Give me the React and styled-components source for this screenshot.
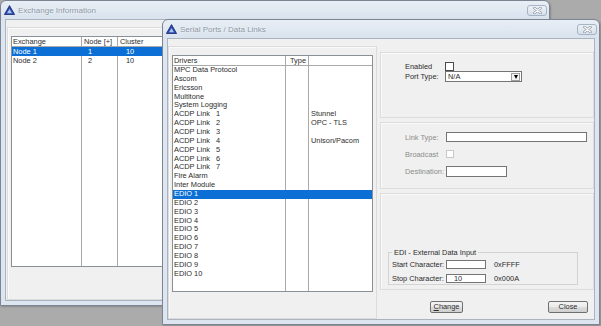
import React from "react";
import styled, { createGlobalStyle } from "styled-components";

const GlobalStyle = createGlobalStyle`
  html, body {
    margin: 0;
    padding: 0;
    background: #ababab;
  }
  * {
    box-sizing: border-box;
  }
`;

const FONT = `"Liberation Sans", Arial, sans-serif`;

// 1px vertical rules drawn behind list rows, at the given x offsets
const columnLines = (xs) =>
  "linear-gradient(to right, " +
  xs
    .map((x, i) => {
      const prev = i === 0 ? 0 : xs[i - 1] + 1;
      return `transparent ${prev}px ${x}px, #a9a9a9 ${x}px ${x + 1}px`;
    })
    .join(", ") +
  `, transparent ${xs[xs.length - 1] + 1}px)`;

const drivers = [
  { name: "MPC Data Protocol" },
  { name: "Ascom" },
  { name: "Ericsson" },
  { name: "Multitone" },
  { name: "System Logging" },
  { link: 1, extra: "Stunnel" },
  { link: 2, extra: "OPC - TLS" },
  { link: 3 },
  { link: 4, extra: "Unison/Pacom" },
  { link: 5 },
  { link: 6 },
  { link: 7 },
  { name: "Fire Alarm" },
  { name: "Inter Module" },
  ...Array.from({ length: 10 }, (_, i) => ({ name: `EDIO ${i + 1}` })),
];

const exchanges = [
  { name: "Node 1", node: "1", cluster: "10" },
  { name: "Node 2", node: "2", cluster: "10" },
];

function AppIcon() {
  return (
    <svg width="11" height="10" viewBox="0 0 11 10">
      <polygon points="5.5,0.6 10.6,9.5 0.4,9.5" fill="#2a4cae" stroke="#16266e" strokeWidth="0.8" />
      <polygon points="5.5,4 8,8.2 3,8.2" fill="#a9c2ef" />
    </svg>
  );
}

function CloseGlyph() {
  return (
    <svg width="9" height="7" viewBox="0 0 9 7">
      <path d="M1.5 1 L7.5 6 M7.5 1 L1.5 6" stroke="#8e99a6" strokeWidth="2.6" strokeLinecap="round" />
      <path d="M1.5 1 L7.5 6 M7.5 1 L1.5 6" stroke="#ffffff" strokeWidth="1.1" strokeLinecap="round" />
    </svg>
  );
}

function DialogWindow({ left, top, width, height, title, children }) {
  return (
    <Window $left={left} $top={top} $width={width} $height={height}>
      <TitleBar>
        <AppIcon />
        <Title>{title}</Title>
        <CloseButton>
          <CloseGlyph />
        </CloseButton>
      </TitleBar>
      <Client>{children}</Client>
    </Window>
  );
}

export default function App() {
  const frontCols = "113px 23px 1fr";
  const backCols = "70px 36px 1fr";

  return (
    <>
      <GlobalStyle />
      <Desktop>
        <DialogWindow left={0} top={0} width={550} height={306} title="Exchange Information">
          <ExchangePanel>
            <ListView>
              <ListHeader $cols={backCols}>
                <HeadCell $pad={1}>Exchange</HeadCell>
                <HeadCell $pad={2}>Node [+]</HeadCell>
                <HeadCell $pad={2}>Cluster</HeadCell>
              </ListHeader>
              <ListBody $lines={[69, 105]}>
                {exchanges.map((ex, i) => (
                  <Row key={ex.name} $cols={backCols} $h={9} $selected={i === 0}>
                    <Cell $pad={1}>{ex.name}</Cell>
                    <Cell $pad={6}>{ex.node}</Cell>
                    <Cell $pad={8}>{ex.cluster}</Cell>
                  </Row>
                ))}
              </ListBody>
            </ListView>
          </ExchangePanel>
        </DialogWindow>

        <DialogWindow left={162} top={19} width={438} height={306} title="Serial Ports / Data Links">
          <DriverPanel>
            <ListView>
              <ListHeader $cols={frontCols}>
                <HeadCell $pad={1}>Drivers</HeadCell>
                <HeadCell $pad={4}>Type</HeadCell>
                <HeadCell $pad={2} $last />
              </ListHeader>
              <ListBody $lines={[112, 135]}>
                {drivers.map((d, i) => (
                  <Row key={i} $cols={frontCols} $h={8.87} $selected={i === 14}>
                    <Cell $pad={1}>
                      {d.link ? (
                        <>
                          <LinkName>ACDP Link</LinkName>
                          {d.link}
                        </>
                      ) : (
                        d.name
                      )}
                    </Cell>
                    <Cell $pad={4} />
                    <Cell $pad={2}>{d.extra}</Cell>
                  </Row>
                ))}
              </ListBody>
            </ListView>
          </DriverPanel>

          <SideColumn>
            <PortGroup>
              <FormGrid $label={40} $rows="10px 11px" $gap={0}>
                <Label>Enabled</Label>
                <CheckBox />
                <Label>Port Type:</Label>
                <Select>
                  <span>N/A</span>
                  <DropButton>
                    <Arrow />
                  </DropButton>
                </Select>
              </FormGrid>
            </PortGroup>

            <LinkGroup>
              <FormGrid $label={41} $rows="10px 10px 11px" $gap={7}>
                <Label $disabled>Link Type:</Label>
                <TextBox $width={141} $height={10} />
                <Label $disabled>Broadcast</Label>
                <CheckBox $disabled />
                <Label $disabled>Destination:</Label>
                <TextBox $width={61} $height={11} />
              </FormGrid>
            </LinkGroup>

            <EdiGroup>
              <GroupBox>
                <Legend>EDI - External Data Input</Legend>
                <EdiGrid>
                  <Label>Start Character:</Label>
                  <TextBox $width={40} $height={9} />
                  <Label>0xFFFF</Label>
                  <Label>Stop Character:</Label>
                  <TextBox $width={40} $height={9} $pad={7}>
                    10
                  </TextBox>
                  <Label>0x000A</Label>
                </EdiGrid>
              </GroupBox>
            </EdiGroup>

            <ButtonBar>
              <Button $width={33}>
                <u>C</u>hange
              </Button>
              <Button $width={40}>Close</Button>
            </ButtonBar>
          </SideColumn>
        </DialogWindow>
      </Desktop>
    </>
  );
}

const Desktop = styled.div`
  position: relative;
  width: 601px;
  height: 326px;
  overflow: hidden;
  background: #ababab;
  font-family: ${FONT};
  font-size: 7.4px;
  color: #2c2c2c;
`;

const Window = styled.div`
  position: absolute;
  left: ${(p) => p.$left}px;
  top: ${(p) => p.$top}px;
  width: ${(p) => p.$width}px;
  height: ${(p) => p.$height}px;
  display: flex;
  flex-direction: column;
  padding: 0 4px 4px;
  border: 1px solid #7b8490;
  border-radius: 6px 6px 0 0;
  background: linear-gradient(#e8eef5, #d8e2ed 19px, #dde6f0 19px, #dde6f0);
  box-shadow: 1px 1px 2px rgba(0, 0, 0, 0.2);
`;

const TitleBar = styled.div`
  display: flex;
  align-items: center;
  height: 18px;
  margin: 0 -2px 0 -1px;
  gap: 3px;
`;

const Title = styled.div`
  flex: 1;
  font-size: 8px;
  color: #8b97a4;
  text-shadow: 0 0 2px #ffffff;
  white-space: nowrap;
`;

const CloseButton = styled.div`
  display: flex;
  align-items: center;
  justify-content: center;
  width: 20px;
  height: 11px;
  border: 1px solid #a6b3c2;
  border-radius: 3px;
  background: linear-gradient(#edf2f7, #d6e0ea);
`;

const Client = styled.div`
  flex: 1;
  display: flex;
  border: 1px solid #aab4bf;
  background: #f0f0f0;
`;

const Panel = styled.div`
  display: flex;
  border: 1px solid #dcdcdc;
  box-shadow: inset 1px 1px 0 #fafafa;
`;

const ExchangePanel = styled(Panel)`
  flex: 1;
  margin: 7px 1px 0 1px;
  padding: 8px 3px 32px 3px;
`;

const DriverPanel = styled(Panel)`
  width: 209px;
  margin-top: 7px;
  padding: 8px 3px 26px 3px;
`;

const ListView = styled.div`
  flex: 1;
  display: flex;
  flex-direction: column;
  background: #ffffff;
  border: 1px solid #8a9098;
`;

const ListHeader = styled.div`
  display: grid;
  grid-template-columns: ${(p) => p.$cols};
  height: 10px;
  border-bottom: 1px solid #a9a9a9;
`;

const HeadCell = styled.div`
  padding-left: ${(p) => p.$pad}px;
  line-height: 9px;
  white-space: nowrap;
  overflow: hidden;
  border-right: ${(p) => (p.$last ? "none" : "1px solid #a9a9a9")};
`;

const ListBody = styled.div`
  flex: 1;
  background: ${(p) => columnLines(p.$lines)};
`;

const Row = styled.div`
  display: grid;
  grid-template-columns: ${(p) => p.$cols};
  height: ${(p) => p.$h}px;
  line-height: ${(p) => p.$h}px;
  background: ${(p) => (p.$selected ? "#0b6fd6" : "transparent")};
  color: ${(p) => (p.$selected ? "#ffffff" : "inherit")};
`;

const Cell = styled.div`
  padding-left: ${(p) => p.$pad}px;
  white-space: nowrap;
  overflow: hidden;
`;

const LinkName = styled.span`
  display: inline-block;
  width: 42px;
`;

const SideColumn = styled.div`
  width: 214px;
  margin-left: 3px;
  display: flex;
  flex-direction: column;
  padding-top: 13px;
`;

const PortGroup = styled(Panel)`
  height: 66px;
  padding: 8px 0 0 24px;
  margin-bottom: 4px;
`;

const LinkGroup = styled(Panel)`
  height: 67px;
  padding: 9px 0 0 24px;
  margin-bottom: 4px;
`;

const EdiGroup = styled(Panel)`
  height: 97px;
  flex-direction: column;
  padding-top: 54px;
`;

const FormGrid = styled.div`
  display: grid;
  grid-template-columns: ${(p) => p.$label}px auto;
  grid-template-rows: ${(p) => p.$rows};
  row-gap: ${(p) => p.$gap}px;
  align-items: center;
  justify-items: start;
  align-content: start;
`;

const Label = styled.span`
  white-space: nowrap;
  color: ${(p) => (p.$disabled ? "#8c8c8c" : "#2c2c2c")};
`;

const CheckBox = styled.span`
  display: block;
  width: ${(p) => (p.$disabled ? 8 : 9)}px;
  height: ${(p) => (p.$disabled ? 8 : 9)}px;
  border: 1px solid ${(p) => (p.$disabled ? "#c9c9c9" : "#4a4a4a")};
  background: #ffffff;
`;

const Select = styled.div`
  display: flex;
  align-items: center;
  justify-content: space-between;
  width: 77px;
  height: 11px;
  padding: 0 1px 0 2px;
  border: 1px solid #747474;
  background: #ffffff;
  line-height: 9px;
`;

const DropButton = styled.span`
  display: flex;
  align-items: center;
  justify-content: center;
  width: 9px;
  height: 8px;
  border: 1px solid #a0a0a0;
  background: #f4f4f4;
`;

const Arrow = styled.span`
  width: 0;
  height: 0;
  border-left: 2.5px solid transparent;
  border-right: 2.5px solid transparent;
  border-top: 4px solid #000000;
`;

const TextBox = styled.div`
  width: ${(p) => p.$width}px;
  height: ${(p) => p.$height}px;
  padding-left: ${(p) => p.$pad || 2}px;
  border: 1px solid #747474;
  background: #ffffff;
  line-height: ${(p) => p.$height - 2}px;
`;

const GroupBox = styled.fieldset`
  margin: 0 15px 0 7px;
  padding: 3px 0 1px 3px;
  border: 1px solid #d3d3d3;
  min-width: 0;
`;

const Legend = styled.legend`
  padding: 0 2px;
  font-size: 7.4px;
  line-height: 9px;
`;

const EdiGrid = styled.div`
  display: grid;
  grid-template-columns: 54px 40px auto;
  grid-template-rows: 9px 9px;
  row-gap: 5px;
  column-gap: 0;
  align-items: center;
  & > :nth-child(3n) {
    margin-left: 8px;
  }
`;

const ButtonBar = styled.div`
  flex: 1;
  display: flex;
  align-items: flex-start;
  justify-content: space-between;
  padding: 11px 6px 0 50px;
`;

const Button = styled.button`
  width: ${(p) => p.$width}px;
  height: 12px;
  padding: 0;
  border: 1px solid #707070;
  border-radius: 2px;
  background: linear-gradient(#f4f4f4 0%, #ebebeb 45%, #dddddd 50%, #cfcfcf 100%);
  font-family: ${FONT};
  font-size: 7.4px;
  line-height: 10px;
  color: #2c2c2c;
`;
